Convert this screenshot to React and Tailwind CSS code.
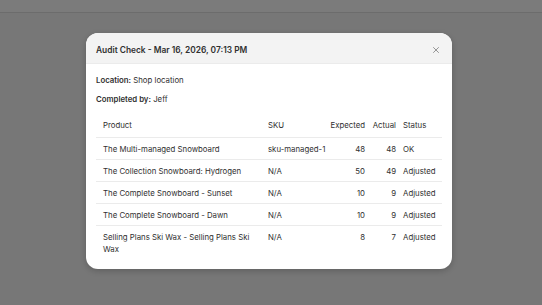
import React from 'react';

const rows = [
  { product: 'The Multi-managed Snowboard', sku: 'sku-managed-1', expected: 48, actual: 48, status: 'OK' },
  { product: 'The Collection Snowboard: Hydrogen', sku: 'N/A', expected: 50, actual: 49, status: 'Adjusted' },
  { product: 'The Complete Snowboard - Sunset', sku: 'N/A', expected: 10, actual: 9, status: 'Adjusted' },
  { product: 'The Complete Snowboard - Dawn', sku: 'N/A', expected: 10, actual: 9, status: 'Adjusted' },
  { product: 'Selling Plans Ski Wax - Selling Plans Ski Wax', sku: 'N/A', expected: 8, actual: 7, status: 'Adjusted' },
];

export default function App() {
  return (
    <div
      className="w-[542px] h-[305px] bg-[#777777] overflow-hidden text-[#303030]"
      style={{ fontFamily: 'Inter, "Noto Sans", sans-serif' }}
    >
      {/* page behind the overlay */}
      <div className="h-[13px] bg-[#7b7b7b] border-b border-[#6c6c6c]" />

      <div className="ml-[86px] mt-[20px] w-[366px] bg-white rounded-[12px] overflow-hidden shadow-[0_2px_6px_rgba(0,0,0,0.2)]">
        <div className="h-[31px] bg-[#f3f3f3] border-b border-[#ebebeb] flex items-center justify-between pt-[4px] pl-[10px] pr-[13px]">
          <span className="text-[8.4px] font-semibold text-[#303030]">Audit Check - Mar 16, 2026, 07:13 PM</span>
          <svg width="6" height="6" viewBox="0 0 6 6" className="text-[#8a8a8a]">
            <path d="M0.5 0.5L5.5 5.5M5.5 0.5L0.5 5.5" stroke="currentColor" strokeWidth="0.9" strokeLinecap="round" />
          </svg>
        </div>

        <div className="px-[10px] pt-[10px] pb-[10px] text-[7.8px]">
          <p className="leading-[12px]">
            <span className="font-semibold">Location:</span> Shop location
          </p>
          <p className="leading-[12px] mt-[7px]">
            <span className="font-semibold">Completed by:</span> Jeff
          </p>

          <table className="mt-[11px] w-full table-fixed border-collapse">
            <colgroup>
              <col className="w-[172px]" />
              <col className="w-[61px]" />
              <col className="w-[40px]" />
              <col className="w-[31px]" />
              <col />
            </colgroup>
            <thead>
              <tr className="border-b border-[#ebebeb]">
                <th className="pl-[7px] pt-[3px] pb-[6px] leading-[12px] text-left font-normal">Product</th>
                <th className="pt-[3px] pb-[6px] leading-[12px] text-left font-normal">SKU</th>
                <th className="pr-[4px] pt-[3px] pb-[6px] leading-[12px] text-right font-normal">Expected</th>
                <th className="pr-[4px] pt-[3px] pb-[6px] leading-[12px] text-right font-normal">Actual</th>
                <th className="pl-[3px] pt-[3px] pb-[6px] leading-[12px] text-left font-normal">Status</th>
              </tr>
            </thead>
            <tbody>
              {rows.map((r, i) => (
                <tr key={i} className={i < rows.length - 1 ? 'border-b border-[#ebebeb]' : ''}>
                  <td className="pl-[7px] pr-[8px] pt-[5px] pb-[4px] align-top leading-[12px]">{r.product}</td>
                  <td className="pt-[5px] pb-[4px] align-top leading-[12px] whitespace-nowrap">{r.sku}</td>
                  <td className="pr-[4px] pt-[5px] pb-[4px] text-right align-top leading-[12px]">{r.expected}</td>
                  <td className="pr-[4px] pt-[5px] pb-[4px] text-right align-top leading-[12px]">{r.actual}</td>
                  <td className="pl-[3px] pt-[5px] pb-[4px] align-top leading-[12px]">{r.status}</td>
                </tr>
              ))}
            </tbody>
          </table>
        </div>
      </div>
    </div>
  );
}
